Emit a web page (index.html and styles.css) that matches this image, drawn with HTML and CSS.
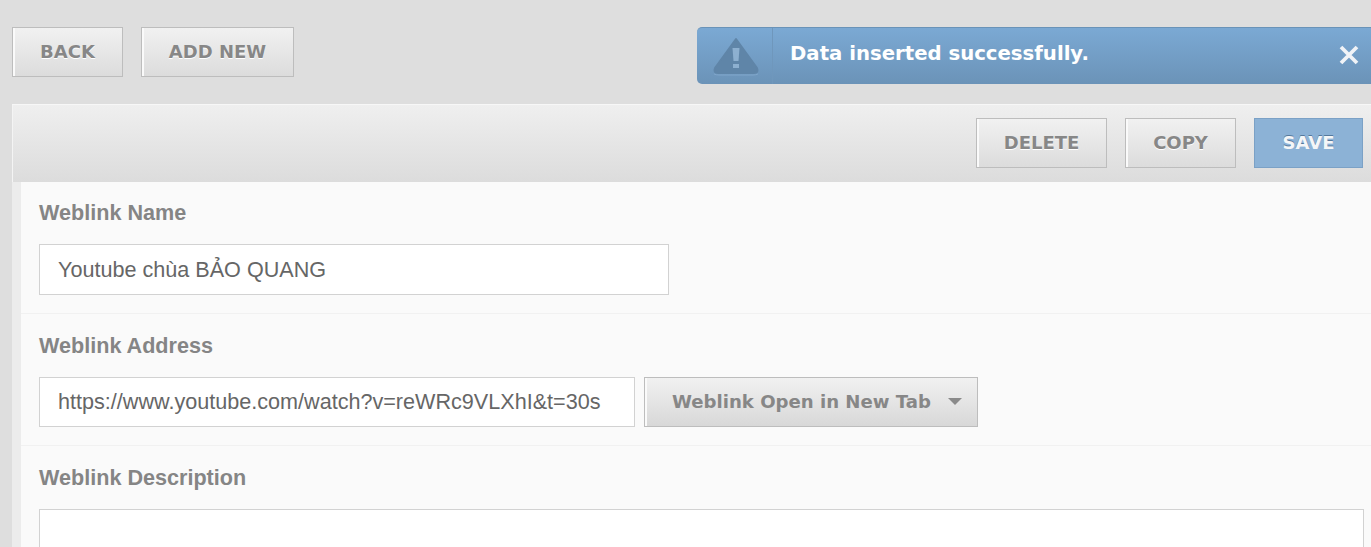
FILE: index.html
```html
<!DOCTYPE html>
<html>
<head>
    <title>Weblink</title>
    <link rel="stylesheet" href="styles.css">
</head>
<body>
    <div class="topbar">
        <div class="top-buttons">
            <a class="button back">BACK</a>
            <a class="button add">ADD NEW</a>
        </div>
        <div class="alert">
            <div class="alert-icon">
                <svg width="50" height="40" viewBox="0 0 50 40">
                    <path d="M25 3 L46 32 Q48 37 43 37 L7 37 Q2 37 4 32 Z" fill="#5f85a8" stroke="#5f85a8" stroke-width="2" stroke-linejoin="round"/>
                    <path d="M3 38 Q5 39 8 39 L42 39 Q45 39 47 38" fill="none" stroke="#80a6ca" stroke-width="1"/>
                    <path d="M21.5 12 L28.5 12 L27.5 25 L22.5 25 Z" fill="#8db0d0"/>
                    <rect x="22" y="28" width="6" height="4" fill="#8db0d0"/>
                </svg>
            </div>
            <div class="alert-text">Data inserted successfully.</div>
            <div class="alert-close">
                <svg width="20" height="20" viewBox="0 0 20 20">
                    <path d="M2 2 L18 18 M18 2 L2 18" stroke="#f0f3f7" stroke-width="3.8" fill="none"/>
                </svg>
            </div>
        </div>
    </div>

    <div class="panel">
        <div class="panel-head">
            <a class="button delete">DELETE</a>
            <a class="button copy">COPY</a>
            <a class="button save">SAVE</a>
        </div>
        <div class="panel-body">
            <div class="form-group first">
                <label>Weblink Name</label>
                <div class="field-row">
                    <input class="input name" type="text" value="Youtube chùa BẢO QUANG">
                </div>
            </div>
            <div class="form-group">
                <label>Weblink Address</label>
                <div class="field-row">
                    <input class="input address" type="text" value="https://www.youtube.com/watch?v=reWRc9VLXhI&amp;t=30s">
                    <div class="select-box">
                        <span>Weblink Open in New Tab</span>
                        <i class="caret"></i>
                    </div>
                </div>
            </div>
            <div class="form-group last">
                <label>Weblink Description</label>
                <div class="description"></div>
            </div>
        </div>
    </div>
</body>
</html>
```

FILE: styles.css
```css
body {
    margin: 0;
    height: 547px;
    overflow: hidden;
    background-color: #dedede;
    font-family: "Liberation Sans", Arial, sans-serif;
}
.topbar {
    display: flex;
    justify-content: space-between;
    align-items: flex-start;
    height: 77px;
    padding: 27px 0 0 12px;
    box-sizing: border-box;
}
.top-buttons {
    display: flex;
    gap: 18px;
}
.button {
    display: flex;
    align-items: center;
    justify-content: center;
    height: 50px;
    box-sizing: border-box;
    padding-bottom: 1px;
    border: 1px solid #bdbdbd;
    box-shadow: inset 2px 0 0 #fafafa;
    background: linear-gradient(#f1f1f1, #dcdcdc);
    color: #878787;
    font-family: "DejaVu Sans", Verdana, sans-serif;
    font-weight: bold;
    font-size: 18px;
    text-shadow: 0 1px 0 #fff;
}
.back { width: 111px; }
.add { width: 153px; }
.alert {
    display: flex;
    align-items: center;
    width: 674px;
    height: 57px;
    box-sizing: border-box;
    border-radius: 5px 0 0 5px;
    border-top: 1px solid #6a93b8;
    background: linear-gradient(#7ba9d4, #6b93b8);
    color: #fff;
}
.alert-icon {
    display: flex;
    align-items: center;
    justify-content: center;
    width: 76px;
    height: 100%;
    box-sizing: border-box;
    padding-left: 2px;
    border-right: 1px solid #6f97bc;
}
.alert-text {
    flex: 1;
    padding: 0 0 6px 17px;
    font-family: "DejaVu Sans", Verdana, sans-serif;
    font-weight: bold;
    font-size: 19.7px;
}
.alert-close {
    display: flex;
    padding: 0 12px 2px 0;
}
.panel {
    margin: 27px 0 0 12px;
    border-left: 9px solid #ececec;
    background-color: #fafafa;
}
.panel-head {
    display: flex;
    justify-content: flex-end;
    gap: 18px;
    height: 78px;
    margin-left: -9px;
    padding: 13px 8px 0 0;
    box-sizing: border-box;
    border-top: 1px solid #f7f7f7;
    background: linear-gradient(#efefef, #dcdcdc);
    box-shadow: inset 1px 0 0 #f4f4f4;
}
.delete { width: 131px; }
.copy { width: 111px; }
.save {
    width: 109px;
    border-color: #7ba1c6;
    box-shadow: none;
    background: #8cb2d6;
    color: #f4f6f8;
    text-shadow: 0 -1px 0 #55799c;
}
.form-group {
    height: 132px;
    box-sizing: border-box;
    padding: 20px 7px 0 18px;
    border-bottom: 1px solid #f1f1f1;
}
.form-group.first {
    height: 132px;
    padding-top: 19px;
}
.form-group.last {
    height: 101px;
    border-bottom: none;
}
.form-group label {
    display: block;
    height: 23px;
    margin-bottom: 20px;
    line-height: 23px;
    font-weight: bold;
    font-size: 21.6px;
    color: #858585;
}
.field-row {
    display: flex;
    gap: 9px;
}
.input {
    height: 51px;
    box-sizing: border-box;
    padding: 0 18px;
    border: 1px solid #d2d2d2;
    border-radius: 0;
    outline: none;
    background: #fff;
    color: #666;
    font-family: "Liberation Sans", Arial, sans-serif;
    font-size: 21.6px;
}
.name { width: 630px; }
.address { width: 596px; height: 50px; }
.select-box {
    display: flex;
    align-items: center;
    width: 334px;
    height: 50px;
    box-sizing: border-box;
    padding: 0 15px 2px 27px;
    border: 1px solid #bdbdbd;
    box-shadow: inset 2px 0 0 #fafafa;
    background: linear-gradient(#f1f1f1, #d8d8d8);
    color: #878787;
    font-family: "DejaVu Sans", Verdana, sans-serif;
    font-weight: bold;
    font-size: 18.1px;
}
.select-box span {
    flex: 1;
}
.caret {
    width: 0;
    height: 0;
    border-left: 7px solid transparent;
    border-right: 7px solid transparent;
    border-top: 7px solid #8a8a8a;
}
.description {
    height: 38px;
    box-sizing: border-box;
    border: 1px solid #d2d2d2;
    border-bottom: none;
    background: #fff;
}
```
